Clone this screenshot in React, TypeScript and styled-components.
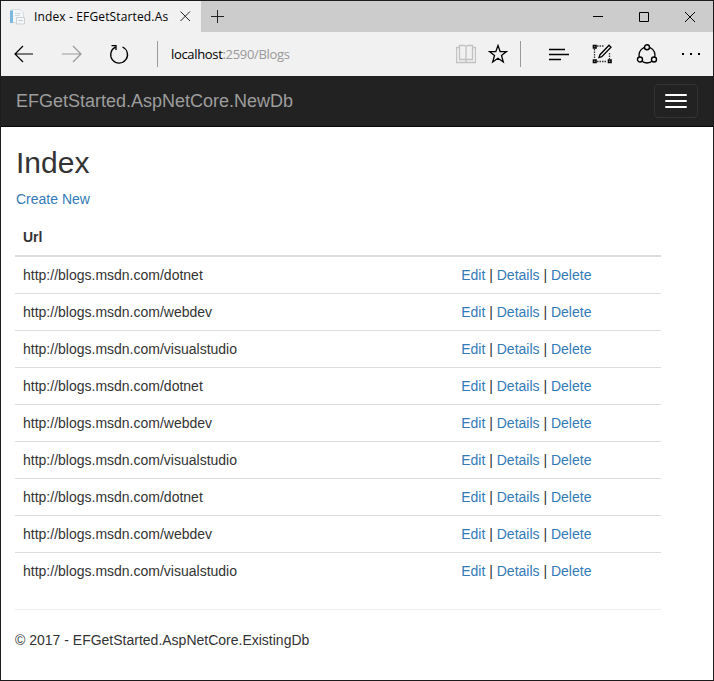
import React from "react";
import styled, { createGlobalStyle } from "styled-components";

const Global = createGlobalStyle`
  * { box-sizing: border-box; }
  html, body { margin: 0; padding: 0; background: #fff; }
`;

const Window = styled.div`
  width: 714px;
  height: 681px;
  border: 1px solid #1d1b1c;
  display: flex;
  flex-direction: column;
  background: #fff;
  overflow: hidden;
  font-family: "Liberation Sans", Arial, sans-serif;
  font-size: 14px;
  line-height: 20px;
  color: #333;
`;

const TitleBar = styled.div`
  height: 31px;
  flex: none;
  display: flex;
  background: #ccc;
`;

const Tab = styled.div`
  width: 200px;
  display: flex;
  align-items: center;
  padding-left: 8px;
  background: #f1f1f1;
`;

const TabTitle = styled.span`
  width: 136px;
  margin-left: 9px;
  overflow: hidden;
  white-space: nowrap;
  font-family: "Open Sans", sans-serif;
  font-size: 12px;
  line-height: 20px;
  letter-spacing: 0.14px;
  color: #000;
`;

const Icon = styled.svg<{ $gap?: number }>`
  display: block;
  flex: none;
  margin-left: ${(p) => p.$gap ?? 0}px;
  fill: none;
  stroke: #000;
`;

const Spacer = styled.div`
  flex: 1;
`;

const CaptionButtons = styled.div`
  display: flex;
  align-items: center;
  padding-right: 18px;
`;

const Toolbar = styled.div`
  height: 44px;
  flex: none;
  display: flex;
  align-items: center;
  padding-left: 12px;
  background: #f1f1f1;
`;

const Divider = styled.div<{ $gap: number }>`
  width: 1px;
  height: 26px;
  margin-left: ${(p) => p.$gap}px;
  background: #999;
`;

const Address = styled.span`
  margin-left: 13px;
  font-family: "Open Sans", sans-serif;
  font-size: 13px;
  letter-spacing: -0.33px;
  color: #000;
`;

const AddressPath = styled.span`
  color: #999;
`;

const Navbar = styled.header`
  height: 51px;
  flex: none;
  display: flex;
  align-items: flex-start;
  justify-content: space-between;
  padding: 8px 15px 0;
  background: #222;
  border-bottom: 1px solid #080808;
`;

const Brand = styled.a`
  margin-top: 7px;
  font-size: 18px;
  color: #9d9d9d;
`;

const Toggle = styled.button`
  width: 44px;
  height: 34px;
  padding: 0 10px;
  display: flex;
  flex-direction: column;
  justify-content: center;
  gap: 4px;
  border: 1px solid #333;
  border-radius: 4px;
  background: transparent;
`;

const ToggleBar = styled.span`
  height: 2px;
  border-radius: 1px;
  background: #fff;
`;

const Page = styled.main`
  width: 660px;
  padding-left: 14px;
`;

const Heading = styled.h2`
  margin: 19px 0 10px 1px;
  font-size: 30px;
  line-height: 33px;
  font-weight: 400;
`;

const Link = styled.a`
  color: #337ab7;
`;

const CreateLine = styled.p`
  margin: 0 0 10px 1px;
`;

const HeaderRow = styled.div`
  padding: 8px;
  border-bottom: 2px solid #ddd;
  font-weight: 700;
`;

const Row = styled.div`
  display: grid;
  grid-template-columns: 438.2px 1fr;
  padding: 8px;
  & + & { border-top: 1px solid #ddd; }
`;

const Rule = styled.hr`
  margin: 20px 0;
  border: 0;
  border-top: 1px solid #eee;
`;

const Footer = styled.footer``;

const urls = ["dotnet", "webdev", "visualstudio"];
const blogs = [...urls, ...urls, ...urls].map((n) => `http://blogs.msdn.com/${n}`);

export default function App() {
  return (
    <>
      <Global />
      <Window>
        <TitleBar>
          <Tab>
            <Icon width="16" height="16" viewBox="0 0 16 16">
              <path d="M2.500 0.500H11L14.500 4V13.500H2.500Z" fill="#f4f7f8" stroke="#d5dcdf" />
              <path d="M1 1.500H4V14H1Z" fill="#7db9de" stroke="none" />
              <path d="M6 4.500H12M6 6.500H11" stroke="#d3dade" />
              <path d="M7.500 8.500H15.500V15H7.500Z" fill="#f3f5f6" stroke="#ccd0d3" />
              <path d="M9.500 11.500H13.500" stroke="#c3cbd0" />
            </Icon>
            <TabTitle>Index - EFGetStarted.As</TabTitle>
            <Icon $gap={10} width="11" height="11" viewBox="0 0 11 11">
              <path d="M0.500 0.500L10 10M10 0.500L0.500 10" stroke="#222" />
            </Icon>
          </Tab>
          <CaptionButtons>
            <Icon $gap={10} width="13" height="13" viewBox="0 0 13 13">
              <path d="M0 6.500H13M6.500 0V13" stroke="#222" />
            </Icon>
          </CaptionButtons>
          <Spacer />
          <CaptionButtons>
            <Icon width="10" height="11" viewBox="0 0 10 11">
              <path d="M0 5.500H10" />
            </Icon>
            <Icon $gap={36} width="10" height="10" viewBox="0 0 10 10">
              <path d="M0.500 0.500H9.500V9.500H0.500Z" />
            </Icon>
            <Icon $gap={36} width="10" height="10" viewBox="0 0 10 10">
              <path d="M0 0L10 10M10 0L0 10" />
            </Icon>
          </CaptionButtons>
        </TitleBar>
        <Toolbar>
          <Icon width="21" height="18" viewBox="0 0 21 18">
            <path d="M20 9H2M10 1L2 9L10 17" strokeWidth="1.200" />
          </Icon>
          <Icon $gap={28} width="20" height="18" viewBox="0 0 20 18">
            <path d="M0 9H19M11 1L19 9L11 17" stroke="#999" strokeWidth="1.200" />
          </Icon>
          <Icon $gap={27} width="20" height="20" viewBox="0 0 20 20">
            <path d="M6.300 3.200A8.400 8.400 0 1 0 13.500 3M2.500 1.700H7V6" strokeWidth="1.300" />
          </Icon>
          <Divider $gap={28} />
          <Address>
            localhost<AddressPath>:2590/Blogs</AddressPath>
          </Address>
          <Spacer />
          <Icon width="20" height="20" viewBox="0 0 20 20">
            <path d="M3.500 1.500H8.500L10 2.500L11.500 1.500H16.500V15.500H3.500ZM10 2.500V18M3 3.500H0.500V18.500H19.500V3.500H17" stroke="#c2c2c2" strokeWidth="1.300" />
          </Icon>
          <Icon $gap={12} width="20" height="20" viewBox="0 0 20 20">
            <path d="M10 1.500L12.200 7.700H18.300L13.500 11.500L15.300 18L10 14.200L4.700 18L6.500 11.500L1.700 7.700H7.800Z" strokeWidth="1.300" />
          </Icon>
          <Divider $gap={12} />
          <Icon $gap={28} width="20" height="13" viewBox="0 0 20 13">
            <path d="M0 1.500H16M0 6.500H20M0 11.500H12" strokeWidth="1.300" />
          </Icon>
          <Icon $gap={23} width="20" height="20" viewBox="0 0 20 20">
            <path d="M5 2H12M2.500 5V15M5 17.500H15M17.500 9V15" stroke="#333" strokeWidth="1.300" strokeDasharray="1.500 1" />
            <path d="M1.500 1.500H4V4H1.500ZM1.500 16H4V18.500H1.500ZM16.500 16H19V18.500H16.500Z" strokeWidth="1.600" />
            <path d="M7 13.500L8 10.700L17 1.200L19 3.200L9.800 12.700Z" strokeWidth="1.300" />
          </Icon>
          <Icon $gap={24} width="22" height="20" viewBox="0 0 22 20">
            <circle cx="11" cy="11" r="8" strokeWidth="1.300" />
            <g fill="#f1f1f1" strokeWidth="1.400">
              <circle cx="11" cy="3.300" r="2.500" />
              <circle cx="4" cy="15.500" r="2.500" />
              <circle cx="18" cy="15.500" r="2.500" />
            </g>
          </Icon>
          <Icon $gap={24} width="31" height="4" viewBox="0 0 31 4">
            <path d="M0 2H2M8 2H10M16 2H18" strokeWidth="2" />
          </Icon>
        </Toolbar>
        <Navbar>
          <Brand>EFGetStarted.AspNetCore.NewDb</Brand>
          <Toggle aria-label="Toggle navigation">
            <ToggleBar />
            <ToggleBar />
            <ToggleBar />
          </Toggle>
        </Navbar>
        <Page>
          <Heading>Index</Heading>
          <CreateLine>
            <Link>Create New</Link>
          </CreateLine>
          <HeaderRow>Url</HeaderRow>
          {blogs.map((url, i) => (
            <Row key={i}>
              <span>{url}</span>
              <span>
                <Link>Edit</Link> | <Link>Details</Link> | <Link>Delete</Link>
              </span>
            </Row>
          ))}
          <Rule />
          <Footer>© 2017 - EFGetStarted.AspNetCore.ExistingDb</Footer>
        </Page>
      </Window>
    </>
  );
}
